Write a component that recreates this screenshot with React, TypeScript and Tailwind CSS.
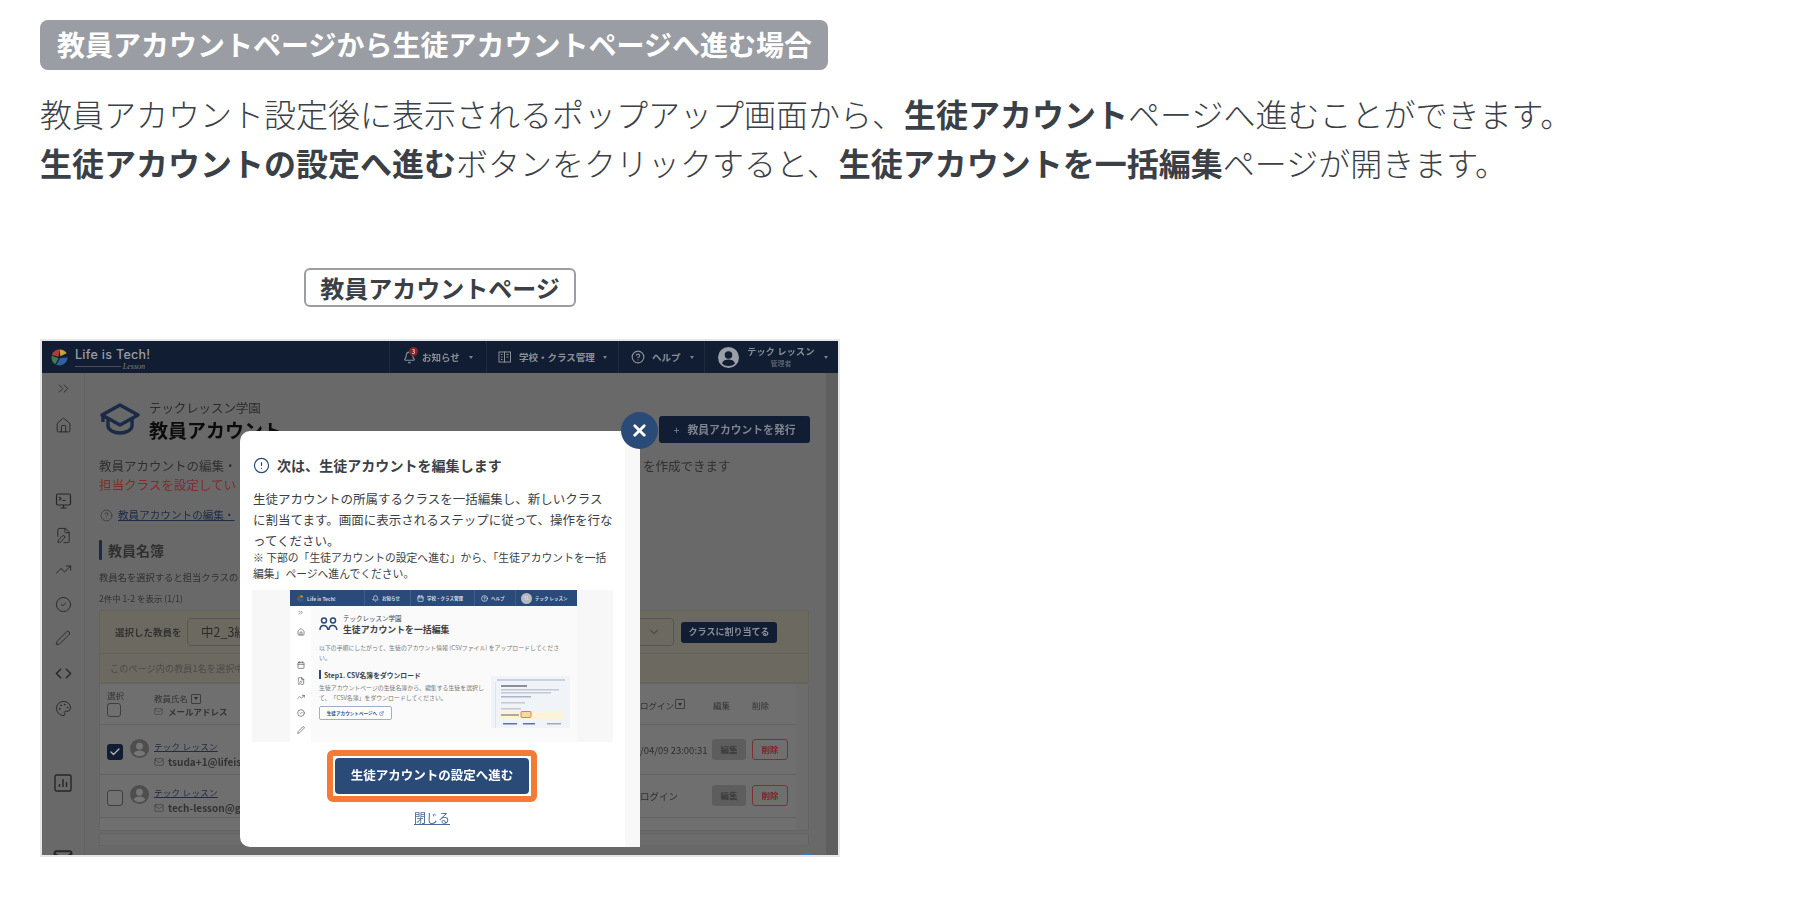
import React from "react";
import { ChevronsRight, Home, FilePen, TrendingUp, CircleCheck, Pen, Code, Palette, Bell, Mail, CircleHelp, Calendar, Check, ChevronDown, ExternalLink, X, CircleAlert } from "lucide-react";

const jp = "font-['Noto_Sans_CJK_JP','Noto_Sans',sans-serif]";

function Logo({ s }: { s: number }) {
  return (
    <svg width={s} height={s} viewBox="0 0 20 20" className="shrink-0">
      <path d="M10 0.500 A9.500 9.500 0 0 0 1 7 L9 9 Z" fill="#b03c3c" />
      <path d="M10 0.500 A9.500 9.500 0 0 1 18.500 5 L11 8.500 Z" fill="#c4a238" />
      <path d="M1 8 A9.500 9.500 0 0 0 5 18 L9 11 Z" fill="#3f7a4a" />
      <path d="M6 18.500 A9.500 9.500 0 0 0 19.500 10 L11 10.500 Z" fill="#2f5f9e" />
    </svg>
  );
}

function Caret() {
  return <span className="w-0 h-0 border-l-[2.500px] border-r-[2.500px] border-t-[3px] border-l-transparent border-r-transparent border-t-[#7d828c]" />;
}

function Avatar({ s, bg, fg }: { s: number; bg: string; fg: string }) {
  return (
    <svg width={s} height={s} viewBox="0 0 20 20" className="shrink-0">
      <circle cx="10" cy="10" r="10" fill={bg} />
      <circle cx="10" cy="7.600" r="3.600" fill={fg} />
      <path d="M3.800 15.600c1-2.600 3.400-3.600 6.200-3.600s5.200 1 6.200 3.600A8 8 0 0 1 10 18a8 8 0 0 1-6.200-2.400z" fill={fg} />
    </svg>
  );
}

function TerminalIcon() {
  return (
    <svg width="17" height="17" viewBox="0 0 17 17" fill="none" stroke="#262626" strokeWidth="1.200" className="block">
      <rect x="1.500" y="1" width="14" height="11" rx="1.500" />
      <path d="M4 4l2 1.700L4 7.400M7.500 7.500h3M8.500 12v3M5.500 15h6" />
    </svg>
  );
}

function ChartBoxIcon() {
  return (
    <svg width="18" height="18" viewBox="0 0 18 18" fill="none" stroke="#262626" strokeWidth="1.400" className="block">
      <rect x="1" y="1" width="16" height="16" rx="1.500" />
      <path d="M5.500 13V10M9 13V5M12.500 13V8" />
    </svg>
  );
}

function BuildingIcon() {
  return (
    <svg width="14" height="14" viewBox="0 0 14 14" fill="none" stroke="#8b8f98" strokeWidth="1">
      <rect x="1" y="2" width="5.500" height="10" />
      <rect x="6.500" y="2" width="6" height="10" />
      <path d="M3 4.500h1.500M3 7h1.500M3 9.500h1.500M8.500 4.500H10.500M8.500 7H10.500" />
    </svg>
  );
}

function Cap() {
  return (
    <svg width="40" height="32" viewBox="0 0 40 32" fill="none" stroke="#1b2a46" strokeWidth="3.400" strokeLinejoin="round" className="shrink-0">
      <path d="M20 2 38 12 20 22 2 12Z" />
      <path d="M8 15v8c0 4 6 7 12 7s12-3 12-7v-8" />
      <path d="M3 12v7" />
    </svg>
  );
}

function Sort() {
  return (
    <span className="inline-flex items-center justify-center w-[10px] h-[10px] border border-[#3d3d3d] rounded-[1px] shrink-0">
      <span className="w-0 h-0 border-l-[2.500px] border-r-[2.500px] border-t-[3px] border-l-transparent border-r-transparent border-t-[#2c2c2c]" />
    </span>
  );
}

function TeacherRow({ h, checked, email, login, pt }: { h: string; checked: boolean; email: string; login: string; pt: string }) {
  return (
    <div className={`flex ${h} ${pt} pl-[7px] border-b border-[#636363]`}>
      <span className={`w-[16px] h-[16px] mt-[5px] rounded-[3px] shrink-0 flex items-center justify-center ${checked ? "bg-[#111d33]" : "border border-[#3f3f3f] bg-[#727272]"}`}>
        {checked && <Check size={12} color="#b5b5b5" strokeWidth={2.500} />}
      </span>
      <span className="ml-[7px]"><Avatar s={19} bg="#4e4e4e" fg="#767676" /></span>
      <div className="ml-[5px] w-[486px] shrink-0">
        <div className="text-[8.500px] leading-[14px] text-[#222c42] underline tracking-[0.3px] whitespace-nowrap">テック レッスン</div>
        <div className="flex items-center mt-[2px] gap-[4px] text-[10px] leading-[14px] font-bold text-[#333] whitespace-nowrap">
          <Mail size={10} color="#333" strokeWidth={1.300} />
          <span>{email}</span>
        </div>
      </div>
      <div className="w-[72px] shrink-0 text-[9.500px] leading-[22px] text-[#2e2e2e] whitespace-nowrap">{login}</div>
      <div className="w-[40px] shrink-0">
        <span className="flex items-center justify-center w-[34px] h-[21px] rounded-[3px] bg-[#5d5d5d] text-[8.500px] font-bold text-[#3c3c3c]">編集</span>
      </div>
      <span className="flex items-center justify-center w-[36px] h-[21px] rounded-[3px] border border-[#7d3232] text-[8.500px] font-bold text-[#7d2626]">削除</span>
    </div>
  );
}

function Thumb() {
  return (
    <svg width="79" height="52" viewBox="0 0 79 52" className="shrink-0 -mt-[3px]">
      <rect width="79" height="52" fill="#f0f3f8" />
      <rect x="6" y="3" width="68" height="2" fill="#c9d1de" />
      <rect x="4" y="6" width="1" height="46" fill="#dfe3ea" />
      <rect x="10" y="9" width="26" height="2" fill="#8a8f99" />
      <rect x="10" y="13" width="58" height="1.500" fill="#c3c8d1" />
      <rect x="10" y="16" width="50" height="1.500" fill="#c3c8d1" />
      <rect x="10" y="20" width="30" height="1.500" fill="#a9b6cc" />
      <rect x="10" y="26" width="24" height="1.500" fill="#c3c8d1" />
      <rect x="10" y="32" width="20" height="1.500" fill="#c3c8d1" />
      <rect x="8" y="35" width="64" height="8" fill="#fbf4d9" />
      <rect x="10" y="38" width="18" height="2" fill="#aaa" />
      <rect x="30" y="35.500" width="10" height="6" rx="1" fill="#f4d9a8" stroke="#f47a36" strokeWidth="1" />
      <rect x="12" y="47" width="14" height="1.500" fill="#5a76a0" />
      <rect x="32" y="47" width="12" height="1.500" fill="#5a76a0" />
      <rect x="56" y="47" width="14" height="1.500" fill="#aaa" />
    </svg>
  );
}

function MiniShot() {
  return (
    <div className="mt-[9px] h-[152px] bg-[#f7f7f7] pl-[38px] pr-[36px] overflow-hidden">
      <div className="h-[16px] bg-[#2a4a78] flex items-center text-[#d7dde8] text-[4.500px] font-bold">
        <div className="w-[74px] pl-[7px] flex items-center gap-[3px]"><Logo s={7} /><span className="text-[5px]">Life is Tech!</span></div>
        <div className="w-[46px] h-full border-l border-[#3d5c8a] flex items-center pl-[7px] gap-[3px]"><Bell size={7} color="#fff" /><span>お知らせ</span></div>
        <div className="w-[64px] h-full border-l border-[#3d5c8a] flex items-center pl-[6px] gap-[3px]"><Calendar size={7} color="#fff" /><span>学校・クラス管理</span></div>
        <div className="w-[41px] h-full border-l border-[#3d5c8a] flex items-center pl-[6px] gap-[3px]"><CircleHelp size={7} color="#fff" /><span>ヘルプ</span></div>
        <div className="flex-1 h-full border-l border-[#3d5c8a] flex items-center pl-[5px] gap-[3px] whitespace-nowrap"><span className="w-[11px] h-[11px] rounded-full bg-[#b5b9bf] text-[4.500px] flex items-center justify-center">TL</span><span>テック レッスン</span></div>
      </div>
      <div className="flex h-[136px] bg-[#fafafa]">
        <div className="w-[21px] bg-white flex flex-col items-center text-[#555] pt-[3px]">
          <ChevronsRight size={7} className="shrink-0" />
          <Home size={8} className="mt-[12px] shrink-0" />
          <Calendar size={8} className="mt-[25px] shrink-0" />
          <FilePen size={8} className="mt-[8px] shrink-0" />
          <TrendingUp size={8} className="mt-[8px] shrink-0" />
          <CircleCheck size={8} className="mt-[8px] shrink-0" />
          <Pen size={8} className="mt-[9px] shrink-0" />
        </div>
        <div className="pl-[8px] flex-1 min-w-0">
          <div className="flex mt-[11px]">
            <svg width="19" height="15" viewBox="0 0 19 15" fill="none" stroke="#2a4a78" strokeWidth="1.500" className="shrink-0">
              <circle cx="5" cy="3.500" r="2.500" /><circle cx="14" cy="3.500" r="2.500" />
              <path d="M1 13c0-6 7-6 8 0M10 13c0-6 7-6 8 0" />
            </svg>
            <div className="ml-[5px] text-[#3d3f44]">
              <div className="text-[6.500px] leading-[9px] -mt-[3px]">テックレッスン学園</div>
              <div className="text-[8.900px] leading-[13px] font-bold whitespace-nowrap">生徒アカウントを一括編集</div>
            </div>
          </div>
          <div className="mt-[7px] w-[248px] text-[5.900px] leading-[10px] text-[#777]">以下の手順にしたがって、生徒のアカウント情報 (CSVファイル) をアップロードしてください。</div>
          <div className="mt-[7px] flex items-center h-[9px]">
            <span className="w-[2px] h-[9px] bg-[#2a4a78]" />
            <span className="ml-[3px] text-[6.800px] font-bold text-[#3d3f44]">Step1. CSV名簿をダウンロード</span>
          </div>
          <div className="flex">
            <div className="w-[172px] shrink-0">
              <div className="mt-[4px] w-[168px] text-[5.900px] leading-[10px] text-[#777]">生徒アカウントページの生徒名簿から、編集する生徒を選択して、「CSV名簿」をダウンロードしてください。</div>
              <div className="mt-[3px] w-[73px] h-[14px] rounded-[2px] border border-[#9db0ca] bg-white flex items-center justify-center gap-[2px] text-[4.600px] font-bold text-[#2a4a78] whitespace-nowrap">生徒アカウントページへ<ExternalLink size={5} /></div>
            </div>
            <Thumb />
          </div>
        </div>
      </div>
    </div>
  );
}

function Modal() {
  return (
    <div className="absolute left-[198px] top-[90px] w-[400px] h-[416px] flex">
      <div className="w-[385px] h-full bg-white rounded-bl-[10px] rounded-tl-[10px] pt-[26px] pl-[13px] text-[#3b3f46]">
        <div className="flex items-center h-[16px]">
          <CircleAlert size={17} color="#2a4a78" strokeWidth={1.700} />
          <span className="ml-[7px] text-[14px] font-bold leading-[16px] tracking-[0.05px]">次は、生徒アカウントを編集します</span>
        </div>
        <div className="w-[360px] mt-[16px] text-[12.500px] leading-[20.800px]">生徒アカウントの所属するクラスを一括編集し、新しいクラスに割当てます。画面に表示されるステップに従って、操作を行なってください。</div>
        <div className="w-[358px] text-[10.800px] leading-[16px] -mt-[2px]">※ 下部の「生徒アカウントの設定へ進む」から、「生徒アカウントを一括編集」ページへ進んでください。</div>
        <div className="-ml-[1px] w-[361px]"><MiniShot /></div>
        <div className="mt-[8px] ml-[74px] w-[210px] h-[52px] rounded-[6px] border-[6px] border-[#f47a36] bg-white p-[2px]">
          <div className="h-full w-full rounded-[4px] bg-[#2a4a78] flex items-center justify-center text-white text-[12.500px] font-bold pb-[2px]">生徒アカウントの設定へ進む</div>
        </div>
        <div className="mt-[7px] ml-[74px] w-[210px] text-center text-[12px] leading-[18px] text-[#4b6a98] underline">閉じる</div>
      </div>
      <div className="w-[15px] h-full bg-[#f8f8f9]" />
      <div className="absolute -right-[18px] -top-[19px] w-[37px] h-[37px] rounded-full bg-[#2a4a78] flex items-center justify-center">
        <X size={19} color="#fff" strokeWidth={3.500} />
      </div>
    </div>
  );
}

function Shot() {
  return (
    <div className="relative mt-[32px] w-[800px] h-[518px] border-2 border-[#e6e7e9] bg-[#696969] overflow-hidden box-border">
      <div className="w-full h-full blur-[0.35px]">
        {/* navbar */}
        <div className="h-[32px] bg-[#111d33] flex items-center text-[#8b8f98] text-[9.500px] font-bold">
          <div className="w-[347px] h-full pl-[9px] flex items-center gap-[7px] shrink-0">
            <Logo s={17} />
            <div>
              <div className="font-['Inter',sans-serif] text-[12.500px] leading-[14px] tracking-[0.3px] text-[#9a9ea6] font-medium">Life is Tech!</div>
              <div className="flex items-center h-[9px] w-[70px] -mb-[4px]">
                <span className="w-[46px] h-px bg-[#5a4a55]" />
                <span className="ml-[2px] font-['Liberation_Serif',serif] italic text-[8px] leading-[9px] text-[#7d828c] font-normal">Lesson</span>
              </div>
            </div>
          </div>
          <div className="w-[97px] h-full border-l border-[#1e2a40] flex items-center pl-[13px] shrink-0 relative">
            <Bell size={13} color="#8b8f98" />
            <span className="absolute left-[19px] top-[6px] w-[9px] h-[9px] rounded-full bg-[#8a2222] text-[6px] text-[#ccc] flex items-center justify-center">3</span>
            <span className="ml-[6px] w-[47px]">お知らせ</span><Caret />
          </div>
          <div className="w-[132px] h-full border-l border-[#1e2a40] flex items-center pl-[11px] shrink-0">
            <BuildingIcon />
            <span className="ml-[7px] w-[84px] whitespace-nowrap">学校・クラス管理</span><Caret />
          </div>
          <div className="w-[86px] h-full border-l border-[#1e2a40] flex items-center pl-[12px] shrink-0">
            <CircleHelp size={14} color="#8b8f98" />
            <span className="ml-[7px] w-[38px]">ヘルプ</span><Caret />
          </div>
          <div className="flex-1 h-full border-l border-[#1e2a40] flex items-center pl-[13px]">
            <Avatar s={21} bg="#9a9ea6" fg="#111d33" />
            <div className="ml-[3px] w-[82px] text-center pr-[4px]">
              <div className="text-[9px] leading-[12px] tracking-[0.3px] whitespace-nowrap">テック レッスン</div>
              <div className="text-[7px] leading-[10px] font-normal text-[#6e7380]">管理者</div>
            </div>
            <Caret />
          </div>
        </div>
        {/* body */}
        <div className="flex h-[484px]">
          <div className="w-[43px] border-r border-[#636363] flex flex-col items-center text-[#262626] shrink-0">
            <ChevronsRight size={17} strokeWidth={1.200} className="mt-[7px] shrink-0" />
            <Home size={17} strokeWidth={1.300} className="mt-[20px] shrink-0" />
            <span className="mt-[59px] shrink-0"><TerminalIcon /></span>
            <FilePen size={17} strokeWidth={1.300} className="mt-[17px] shrink-0" />
            <TrendingUp size={17} strokeWidth={1.300} className="mt-[17px] shrink-0" />
            <CircleCheck size={17} strokeWidth={1.300} className="mt-[18px] shrink-0" />
            <Pen size={16} strokeWidth={1.300} className="mt-[17px] shrink-0" />
            <Code size={17} strokeWidth={2} className="mt-[19px] shrink-0" />
            <Palette size={17} strokeWidth={1.300} className="mt-[18px] shrink-0" />
            <span className="mt-[57px] shrink-0"><ChartBoxIcon /></span>
            <Mail size={20} strokeWidth={2.400} className="mt-[56px] shrink-0" />
          </div>
          <div className="w-[741px] shrink-0 pl-[14px] text-[#303030]">
            <div className="flex h-[44px] mt-[27px] relative">
              <span className="mt-[3px] ml-[1px]"><Cap /></span>
              <div className="ml-[9px]">
                <div className="text-[12.500px] leading-[16px] text-[#2b2b2b] tracking-[-0.1px] whitespace-nowrap">テックレッスン学園</div>
                <div className="text-[19px] leading-[28px] font-bold text-[#0c0c0c] whitespace-nowrap">教員アカウント</div>
              </div>
              <div className="ml-auto mr-[16px] mt-[16px] w-[151px] h-[27px] rounded-[3px] bg-[#111d33] flex items-center justify-center gap-[8px] text-[10.800px] font-bold text-[#7e838d] whitespace-nowrap"><span className="font-normal">+</span><span>教員アカウントを発行</span></div>
            </div>
            <div className="flex mt-[12px] text-[12.500px] leading-[19px]">
              <div className="w-[544px] shrink-0 text-[#303030]">
                <div className="whitespace-nowrap">教員アカウントの編集・</div>
                <div className="whitespace-nowrap text-[#7e2d2d]">担当クラスを設定してい</div>
              </div>
              <span className="whitespace-nowrap">を作成できます</span>
            </div>
            <div className="flex items-center mt-[12px] h-[18px]">
              <CircleHelp size={13} color="#333" strokeWidth={1.300} className="ml-[1px] shrink-0" />
              <span className="ml-[5px] whitespace-nowrap text-[10.600px] text-[#1c2a45] underline">教員アカウントの編集・</span>
            </div>
            <div className="flex items-center mt-[16px] h-[20px]">
              <span className="w-[3px] h-[20px] rounded-[1px] bg-[#1c2a45]" />
              <span className="ml-[6px] text-[14px] font-bold">教員名簿</span>
            </div>
            <div className="mt-[9px] h-[16px] whitespace-nowrap text-[9.300px] leading-[16px]">教員名を選択すると担当クラスの</div>
            <div className="mt-[6px] h-[14px] text-[8.500px] leading-[14px]">2件中 1-2 を表示 (1/1)</div>
            {/* selection panel */}
            <div className="mt-[5px] w-[710px] h-[73px] bg-[#6c6a60] border border-[#666459] rounded-[2px]">
              <div className="h-[43px] flex items-center border-b border-[#646258] pl-[15px]">
                <span className="w-[72px] text-[9.500px] font-bold text-[#333] whitespace-nowrap">選択した教員を</span>
                <div className="w-[487px] h-[28px] border border-[#555] rounded-[4px] flex items-center pl-[13px] pr-[12px] justify-between text-[12.500px] text-[#2a2a2a]">
                  <span>中2_3組</span><ChevronDown size={14} color="#4e4e4e" />
                </div>
                <span className="ml-[7px] w-[96px] h-[21px] rounded-[3px] bg-[#111d33] flex items-center justify-center text-[9px] font-bold text-[#8b8f98] whitespace-nowrap">クラスに割り当てる</span>
              </div>
              <div className="h-[28px] pl-[10px] whitespace-nowrap text-[9.200px] leading-[28px] text-[#4a4a4a]">このページ内の教員1名を選択中</div>
            </div>
            {/* table */}
            <div className="w-[710px] h-[148px] bg-[#6c6c6c] border border-[#646464] rounded-[2px]">
              <div className="w-[696px] h-full bg-[#6f6f6f]">
                <div className="h-[41px] flex border-b border-[#646464] pl-[7px] pt-[5px] text-[8.500px] text-[#333]">
                  <div className="w-[47px] shrink-0">
                    <div className="leading-[13px]">選択</div>
                    <span className="block mt-[1px] w-[14px] h-[14px] rounded-[3px] border border-[#3f3f3f]" />
                  </div>
                  <div className="w-[486px] shrink-0 pt-[3px]">
                    <div className="flex items-center gap-[3px] leading-[13px]">教員氏名<Sort /></div>
                    <div className="flex items-center gap-[5px] leading-[13px] font-bold"><Mail size={9} strokeWidth={1.200} />メールアドレス</div>
                  </div>
                  <div className="w-[72px] shrink-0 pt-[10px] flex items-start gap-[1px] leading-[13px] whitespace-nowrap">ログイン<Sort /></div>
                  <div className="w-[40px] shrink-0 pt-[10px] leading-[13px] pl-[1px]">編集</div>
                  <div className="pt-[10px] leading-[13px]">削除</div>
                </div>
                <TeacherRow h="h-[50px]" pt="pt-[14px]" checked email="tsuda+1@lifeiste" login="/04/09 23:00:31" />
                <TeacherRow h="h-[43px]" pt="pt-[10px]" checked={false} email="tech-lesson@gm" login="ログイン" />
              </div>
            </div>
            <div className="mt-[2px] w-[710px] h-[13px] bg-[#6c6c6c] border border-[#646464] rounded-[2px]" />
          </div>
          <div className="w-[12px] bg-[#5f5f5f] shrink-0" />
        </div>
      </div>
      <span className="absolute left-[753px] top-[512px] w-[24px] h-[24px] rounded-full bg-[#3a78c0]" />
      <Modal />
    </div>
  );
}

export default function App() {
  return (
    <div className={`w-[1820px] h-[922px] bg-white overflow-hidden pl-[40px] pt-[20px] ${jp}`}>
      <div className="w-[788px] h-[50px] rounded-[8px] bg-[#9a9da3] text-white text-[28px] font-bold leading-[48px] pl-[17px] whitespace-nowrap">教員アカウントページから生徒アカウントページへ進む場合</div>
      <div className="mt-[19px] text-[32px] leading-[49px] text-[#3b3f46] font-light whitespace-nowrap">
        <div>教員アカウント設定後に表示されるポップアップ画面から、<b className="font-bold">生徒アカウント</b>ページへ進むことができます。</div>
        <div><b className="font-bold">生徒アカウントの設定へ進む</b>ボタンをクリックすると、<b className="font-bold">生徒アカウントを一括編集</b>ページが開きます。</div>
      </div>
      <div className="mt-[81px] ml-[264px] w-[272px] h-[39px] rounded-[6px] border-2 border-[#9a9da3] text-[#3b3f46] text-[24px] font-bold flex items-center justify-center whitespace-nowrap">教員アカウントページ</div>
      <Shot />
    </div>
  );
}
